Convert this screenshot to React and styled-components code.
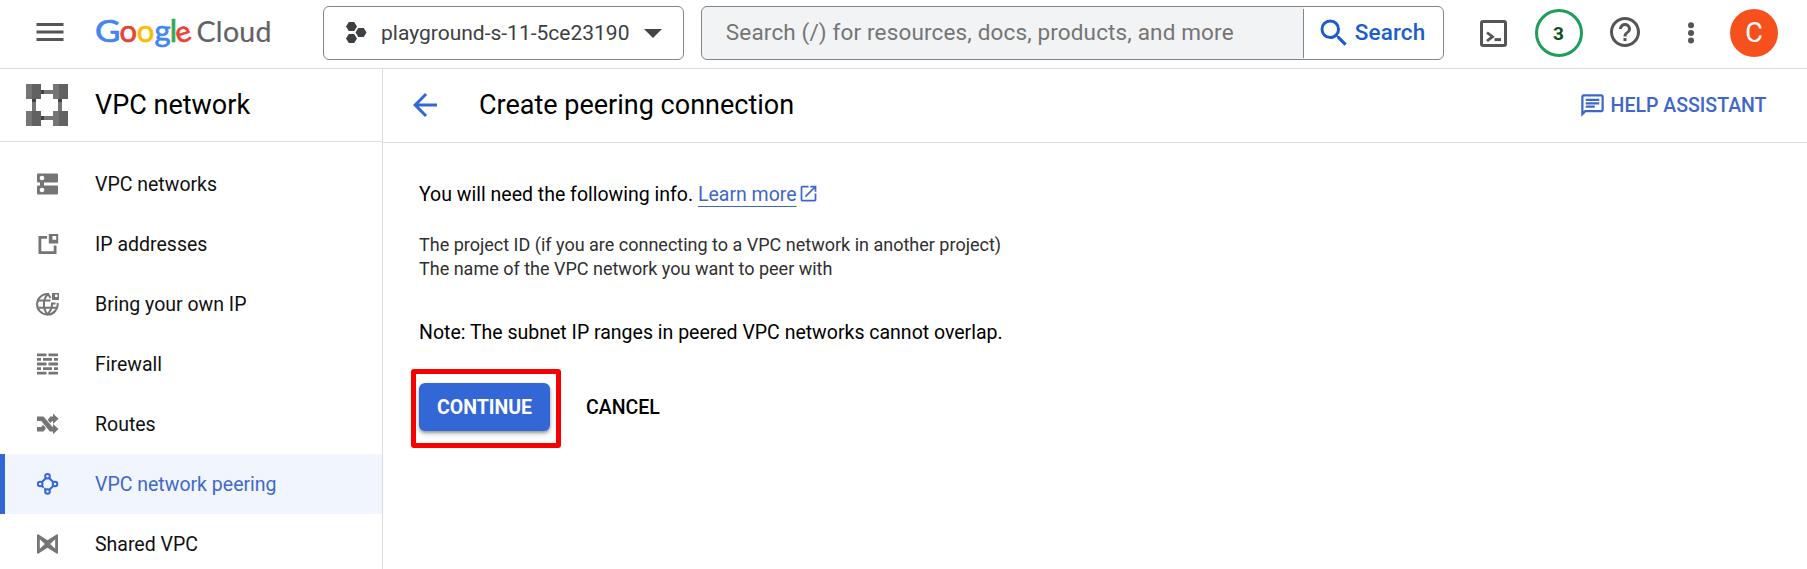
import React from "react";
import styled, { createGlobalStyle } from "styled-components";
import {
  MdMenu,
  MdArrowBack,
  MdOutlineChat,
  MdHelpOutline,
  MdOpenInNew,
  MdSearch,
} from "react-icons/md";

const GlobalStyle = createGlobalStyle`
  * { box-sizing: border-box; }
  body {
    margin: 0;
    background: #fff;
    color: #000;
    font-family: Roboto, "Liberation Sans", sans-serif;
    overflow: hidden;
  }
  svg { display: block; flex: none; }
  button { font: inherit; border: 0; background: none; padding: 0; }
`;

const Page = styled.div`
  height: 569px;
  display: flex;
  flex-direction: column;
`;

const TopBar = styled.header`
  height: 69px;
  flex: none;
  display: flex;
  align-items: flex-start;
  padding: 6px 29px 0 32px;
  border-bottom: 1px solid #dadce0;
  color: #555;
`;

const TopSlot = styled.div`
  height: ${(p) => p.$height || 54}px;
  display: flex;
  align-items: center;
  margin-left: ${(p) => p.$gap || 0}px;
`;

const ProjectPicker = styled.button`
  width: 361px;
  height: 54px;
  margin-left: 51px;
  padding: 0 21px 0 22px;
  display: flex;
  align-items: center;
  border: 1px solid #80868b;
  border-radius: 6px;
  font-size: 21px;
  color: #3c4043;
`;

const ProjectName = styled.span`
  flex: 1;
  text-align: left;
  padding-left: 13px;
  line-height: 28px;
  white-space: nowrap;
`;

const SearchBox = styled.div`
  width: 743px;
  height: 54px;
  margin-left: 17px;
  display: flex;
  align-items: center;
  border: 1px solid #80868b;
  border-radius: 6px;
  overflow: hidden;
  font-size: 22.5px;
  letter-spacing: 0.15px;
  background: linear-gradient(to right, #f1f3f4 602px, #fff 602px);
`;

const SearchField = styled.div`
  width: 602px;
  height: 49px;
  padding-left: 24px;
  line-height: 46px;
  border-right: 1px solid #80868b;
  color: #757575;
  white-space: nowrap;
`;

const SearchButton = styled.button`
  display: flex;
  align-items: center;
  gap: 3px;
  padding: 0 0 1px 12px;
  font-weight: 500;
  letter-spacing: 0.1px;
  line-height: 34px;
  color: #1a5fc8;
`;

const SearchLabel = styled.span`
  padding-bottom: 2px;
`;

const CreditBadge = styled.div`
  width: 48px;
  height: 48px;
  margin-left: 28px;
  border: 3px solid #1e9e5a;
  border-radius: 50%;
  display: flex;
  align-items: center;
  justify-content: center;
  font-size: 19px;
  font-weight: 700;
  color: #0d4f20;
`;

const Avatar = styled.div`
  width: 48px;
  height: 48px;
  margin-left: auto;
  border-radius: 50%;
  background: #f6511d;
  color: #fff;
  font-size: 27px;
  display: flex;
  align-items: center;
  justify-content: center;
`;

const Body = styled.div`
  flex: 1;
  min-height: 0;
  display: flex;
`;

const Sidebar = styled.nav`
  width: 383px;
  flex: none;
  border-right: 1px solid #dadce0;
`;

const ProductHeader = styled.div`
  height: 73px;
  display: flex;
  align-items: center;
  gap: 27px;
  padding-left: 26px;
  border-bottom: 1px solid #dadce0;
  font-size: 27px;
`;

const NavList = styled.div`
  padding-top: 12px;
`;

const NavItem = styled.a`
  height: 60px;
  display: flex;
  align-items: center;
  gap: 35px;
  padding-left: ${(p) => (p.$active ? 31 : 36)}px;
  border-left: ${(p) => (p.$active ? "5px solid #3367d6" : "0")};
  background: ${(p) => (p.$active ? "#f0f5fe" : "transparent")};
  color: ${(p) => (p.$active ? "#4268c8" : "#111")};
  font-size: 19.5px;

  svg {
    color: ${(p) => (p.$active ? "#3367d6" : "#757575")};
  }
`;

const Main = styled.main`
  flex: 1;
`;

const PageHeader = styled.div`
  height: 74px;
  display: flex;
  align-items: center;
  padding: 0 40.5px 1px 24px;
  border-bottom: 1px solid #dadce0;
  color: #3367d6;
`;

const PageTitle = styled.h1`
  margin: 0 auto 0 36px;
  font-size: 27px;
  font-weight: 400;
  line-height: 36px;
  color: #000;
`;

const HelpAssistant = styled.button`
  display: flex;
  align-items: center;
  gap: 4.5px;
  font-size: 19.5px;
  font-weight: 500;
  color: #3f66c9;
`;

const Content = styled.section`
  padding: 37px 0 0 36px;
  font-size: 19.5px;
`;

const Line = styled.p`
  margin: 0;
  line-height: 30px;
`;

const LearnMore = styled.a`
  display: inline-flex;
  align-items: center;
  gap: 1.5px;
  color: #3f66c9;

  svg {
    margin-bottom: 3px;
  }
`;

const LinkText = styled.span`
  text-decoration: underline;
  text-decoration-thickness: 1px;
  text-underline-offset: 5px;
`;

const InfoList = styled.div`
  margin: 23px 0 37px;
  font-size: 18px;
  line-height: 24px;
  color: #303030;
`;

const Actions = styled.div`
  display: flex;
  align-items: center;
  margin: 21px 0 0 -8px;
`;

const Highlight = styled.div`
  width: 150px;
  height: 79px;
  padding: 9px 0 0 3px;
  border: 5px solid #f80000;
  border-radius: 3px;
`;

const PrimaryButton = styled.button`
  width: 131px;
  height: 48px;
  border-radius: 6px;
  background: #3367d6;
  color: #fff;
  font-weight: 700;
  box-shadow: 0 2px 3px rgba(0, 0, 0, 0.3), 0 3px 6px rgba(0, 0, 0, 0.15);
`;

const TextButton = styled.button`
  margin: 0 0 1px 25px;
  font-weight: 500;
  line-height: 30px;
  color: #000;
`;

const Logo = () => (
  <svg width="180" height="44" viewBox="92 10 180 44" fontFamily="Lato, sans-serif">
    <g fontSize="31" strokeWidth="0.7">
      <text x="95" y="42" fill="#4285f4" stroke="#4285f4" textLength="25.5" lengthAdjust="spacingAndGlyphs">G</text>
      <text x="119.600" y="42" fill="#ea4335" stroke="#ea4335">o</text>
      <text x="136.700" y="42" fill="#fbbc04" stroke="#fbbc04">o</text>
      <text x="154.400" y="42" fill="#4285f4" stroke="#4285f4">g</text>
      <text x="169.700" y="42" fill="#34a853" stroke="#34a853">l</text>
      <text x="175.700" y="42" fontSize="29.5" fill="#ea4335" stroke="#ea4335" transform="rotate(-18 183 34.5)">e</text>
    </g>
    <text x="196.500" y="42" fontSize="28.5" fill="#5f6368" stroke="#5f6368" strokeWidth="0.2" textLength="75">Cloud</text>
  </svg>
);

const ProjectIcon = () => (
  <svg width="22" height="24" viewBox="0 0 22 24" fill="#3c4043">
    <path d="M2.8 2h5.4L11 6.5 8.2 11H2.8L0 6.5z" transform="translate(0 -1)" />
    <path d="M2.8 2h5.4L11 6.5 8.2 11H2.8L0 6.5z" transform="translate(0 11)" />
    <path d="M2.8 2h5.4L11 6.5 8.2 11H2.8L0 6.5z" transform="translate(9.5 5)" />
  </svg>
);

const Caret = () => (
  <svg width="18" height="9" viewBox="0 0 18 9" fill="#444">
    <path d="M0 0h18L9 9z" />
  </svg>
);

const ShellIcon = () => (
  <svg width="27" height="27" viewBox="0 0 27 27" fill="none" stroke="#555" strokeWidth="3">
    <rect x="1.5" y="1.5" width="24" height="24" rx="1.5" />
    <path d="M7 12.5l5.5 4.2L7 21" strokeWidth="2.8" />
    <path d="M14.5 19.6h6.5" />
  </svg>
);

const MoreIcon = () => (
  <svg width="6" height="22" viewBox="0 0 6 22" fill="#555">
    <circle cx="3" cy="3.3" r="3" />
    <circle cx="3" cy="11" r="3" />
    <circle cx="3" cy="18.6" r="3" />
  </svg>
);

const corners = [[0, 0], [27, 0], [0, 27], [27, 27]];

const VpcProductIcon = () => (
  <svg width="42" height="42" viewBox="0 0 42 42" shapeRendering="crispEdges">
    <path fill="#757575" d="M15 6h12v4H15zM15 32h12v4H15zM6 15h4v12H6zM32 15h4v12h-4z" />
    <path fill="#424242" d="M15 6h3v4h-3zM15 32h3v4h-3zM6 15h4v3H6zM32 15h4v3h-4z" />
    {corners.map(([x, y]) => (
      <g key={`${x}-${y}`}>
        <rect x={x} y={y} width="15" height="15" fill="#757575" />
        <rect x={x + 6} y={y} width="9" height="15" fill="#616161" />
      </g>
    ))}
  </svg>
);

const NavSvg = ({ children }) => (
  <svg width="24" height="24" viewBox="0 0 24 24" fill="currentColor">
    {children}
  </svg>
);

const NetworksIcon = () => (
  <NavSvg>
    <path
      fillRule="evenodd"
      d="M2 1.500h19a1 1 0 0 1 1 1v7a1 1 0 0 1-1 1H8v3h13a1 1 0 0 1 1 1v7a1 1 0 0 1-1 1H2a1 1 0 0 1-1-1v-7a1 1 0 0 1 1-1h2v-3H2a1 1 0 0 1-1-1v-7a1 1 0 0 1 1-1zM6 3.700a2.300 2.300 0 1 0 .01 0zM6 15.700a2.300 2.300 0 1 0 .01 0z"
    />
  </NavSvg>
);

const AddressIcon = () => (
  <NavSvg>
    <path d="M2.500 4H11v2.700H5.300v12.600h12.400V13.500h2.800V22h-18z" />
    <path fillRule="evenodd" d="M12.800 2h9.400v9.400h-9.400zM16.500 4v3.700h3.700V4z" />
  </NavSvg>
);

const ByoIpIcon = () => (
  <NavSvg>
    <g fill="none" stroke="currentColor" strokeWidth="2">
      <path d="M13 2.100A10.300 10.300 0 1 0 21.600 11" />
      <path d="M12 2.200C6.600 7 6.600 17 11.500 22.300C14.800 19 16 15.500 16 12M12 2.200c1 1.200 1.800 2.500 2.400 3.800M2.500 8.600h12M2.500 15.800h18M15 11.500h4.500" />
    </g>
    <path fillRule="evenodd" d="M16 1h7v7h-7zM19 2.500V5h2.500V2.500z" />
  </NavSvg>
);

const FirewallIcon = () => (
  <NavSvg>
    <path d="M1 1.500h9.500v2.800H1zM12.500 1.500H22v2.800h-9.500zM1 6.100h4v2.700H1zM7 6.100h9v2.700H7zM18 6.100h4v2.700h-4zM1 10.600h9.500v2.800H1zM12.500 10.600H22v2.800h-9.500zM1 15.200h4v2.700H1zM7 15.200h9v2.700H7zM18 15.200h4v2.700h-4zM1 19.700h9.500v2.800H1zM12.500 19.700H22v2.800h-9.500z" />
  </NavSvg>
);

const RoutesIcon = () => (
  <NavSvg>
    <path d="M1 4.500h6.500l9 10.500H17v-3l5.500 5-5.500 5.200V19.500h-3.200L5.300 9H1z" />
    <path d="M17 1.500L22.500 6.700 17 12V9h-.7l-1.800 2.300-2.900-3.400 2.700-3.400H17zM1 15h4.300l1.800-2.200 2.900 3.500-2.500 3.200H1z" />
  </NavSvg>
);

const PeeringIcon = () => (
  <NavSvg>
    <g fill="none" stroke="currentColor" strokeWidth="2">
      <circle cx="11.500" cy="4.300" r="2.300" />
      <circle cx="4.200" cy="12" r="2.300" />
      <circle cx="19" cy="12" r="2.300" />
      <circle cx="11.500" cy="19.500" r="2.300" />
      <path d="M9.800 6.200L6 10M13.300 6.200L17.200 10M17.200 14l-3.900 3.700M6 14l1.600 1.600M9.800 17.700l-1.400-1.400" />
    </g>
  </NavSvg>
);

const SharedIcon = () => (
  <NavSvg>
    <path
      fillRule="evenodd"
      d="M1 3.200c0-.8.8-1.100 1.500-.7l9 5.700 9-5.700c.7-.4 1.500-.1 1.500.7v17.600c0 .8-.8 1.100-1.500.7l-9-5.700-9 5.700c-.7.400-1.500.1-1.500-.7zM3.800 7.300v9.400L8.800 12zM19.200 7.300v9.400L14.200 12z"
    />
  </NavSvg>
);

const navItems = [
  { label: "VPC networks", Icon: NetworksIcon },
  { label: "IP addresses", Icon: AddressIcon },
  { label: "Bring your own IP", Icon: ByoIpIcon },
  { label: "Firewall", Icon: FirewallIcon },
  { label: "Routes", Icon: RoutesIcon },
  { label: "VPC network peering", Icon: PeeringIcon, active: true },
  { label: "Shared VPC", Icon: SharedIcon },
];

export default function App() {
  return (
    <Page>
      <GlobalStyle />
      <TopBar>
        <TopSlot $height={52}>
          <MdMenu size={36} />
        </TopSlot>
        <TopSlot $height={52} $gap={24}>
          <Logo />
        </TopSlot>
        <ProjectPicker>
          <ProjectIcon />
          <ProjectName>playground-s-11-5ce23190</ProjectName>
          <Caret />
        </ProjectPicker>
        <SearchBox>
          <SearchField>Search (/) for resources, docs, products, and more</SearchField>
          <SearchButton>
            <MdSearch size={36} />
            <SearchLabel>Search</SearchLabel>
          </SearchButton>
        </SearchBox>
        <TopSlot $gap={36}>
          <ShellIcon />
          <CreditBadge>3</CreditBadge>
        </TopSlot>
        <TopSlot $height={52} $gap={24}>
          <MdHelpOutline size={36} />
        </TopSlot>
        <TopSlot $height={53} $gap={45.5}>
          <MoreIcon />
        </TopSlot>
        <TopSlot $gap={36}>
          <Avatar>C</Avatar>
        </TopSlot>
      </TopBar>
      <Body>
        <Sidebar>
          <ProductHeader>
            <VpcProductIcon />
            VPC network
          </ProductHeader>
          <NavList>
            {navItems.map(({ label, Icon, active }) => (
              <NavItem key={label} $active={active}>
                <Icon />
                {label}
              </NavItem>
            ))}
          </NavList>
        </Sidebar>
        <Main>
          <PageHeader>
            <MdArrowBack size={36} />
            <PageTitle>Create peering connection</PageTitle>
            <HelpAssistant>
              <MdOutlineChat size={27} />
              HELP ASSISTANT
            </HelpAssistant>
          </PageHeader>
          <Content>
            <Line>
              You will need the following info.{" "}
              <LearnMore>
                <LinkText>Learn more</LinkText>
                <MdOpenInNew size={21} />
              </LearnMore>
            </Line>
            <InfoList>
              <div>The project ID (if you are connecting to a VPC network in another project)</div>
              <div>The name of the VPC network you want to peer with</div>
            </InfoList>
            <Line>Note: The subnet IP ranges in peered VPC networks cannot overlap.</Line>
            <Actions>
              <Highlight>
                <PrimaryButton>CONTINUE</PrimaryButton>
              </Highlight>
              <TextButton>CANCEL</TextButton>
            </Actions>
          </Content>
        </Main>
      </Body>
    </Page>
  );
}
